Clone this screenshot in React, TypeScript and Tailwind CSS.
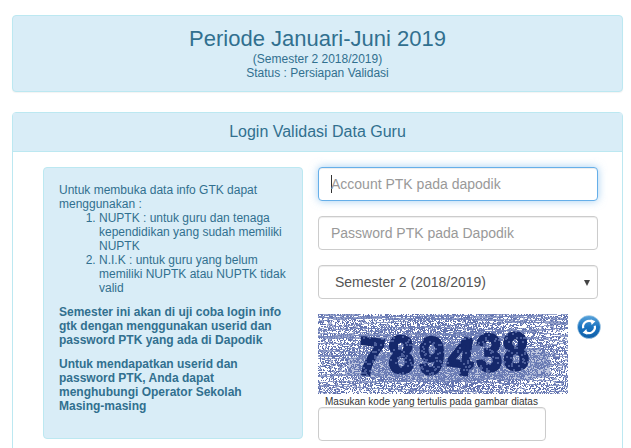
import { useMemo } from 'react';

const FONT = 'font-["Liberation_Sans",Arial,sans-serif]';

// small seeded generator so the captcha noise is the same on every load
function makeRandom(seed: number) {
  let s = seed;
  return () => {
    s = (s * 1664525 + 1013904223) % 4294967296;
    return s / 4294967296;
  };
}

function CaptchaImage() {
  const { noise, specks, lines } = useMemo(() => {
    const rand = makeRandom(7);
    let d = '';
    let sp = '';
    for (let y = 0; y < 80; y++) {
      for (let x = 0; x < 250; x++) {
        const dx = (x - 125) / 125;
        const dy = (y - 42) / 40;
        const density = 0.38 + 0.36 * Math.max(0, 1 - (dx * dx * 1.1 + dy * dy * 0.8));
        if (rand() < density) d += `M${x} ${y}h1v1h-1z`;
        if (rand() < 0.05) sp += `M${x} ${y}h2v2h-2z`;
      }
    }
    const ls: string[] = [];
    for (let i = 0; i < 26; i++) {
      const y1 = rand() * 90 - 5;
      const y2 = y1 + (rand() - 0.5) * 34;
      const cy = (y1 + y2) / 2 + (rand() - 0.5) * 26;
      ls.push(`M-5 ${y1.toFixed(1)}Q125 ${cy.toFixed(1)} 255 ${y2.toFixed(1)}`);
    }
    return { noise: d, specks: sp, lines: ls };
  }, []);

  const digits = [
    { c: '7', x: 38, y: 59, r: 7 },
    { c: '8', x: 71, y: 59, r: -2 },
    { c: '9', x: 100, y: 59, r: 3 },
    { c: '4', x: 128, y: 58, r: 8 },
    { c: '3', x: 159, y: 57, r: -2 },
    { c: '8', x: 186, y: 56, r: -3 },
  ];

  return (
    <svg width="250" height="80" viewBox="0 0 250 80" className="block shrink-0" shapeRendering="crispEdges">
      <rect width="250" height="80" fill="#ffffff" />
      <path d={noise} fill="#6172ae" />
      {lines.map((d, i) => (
        <path key={i} d={d} fill="none" stroke="#6f80b8" strokeWidth="1" opacity="0.7" />
      ))}
      <path d="M30 44L150 26L232 38L232 64L120 68L30 62Z" fill="#6f80b8" opacity="0.45" />
      {digits.map((g, i) => (
        <text
          key={i}
          transform={`translate(${g.x} ${g.y}) rotate(${g.r}) scale(0.88 1)`}
          fontFamily="'Liberation Sans', Arial, sans-serif"
          fontWeight="700"
          fontSize="52"
          fill="#15286b"
          stroke="#15286b"
          strokeWidth="3"
        >
          {g.c}
        </text>
      ))}
      <path d={specks} fill="#6f80b8" opacity="0.6" />
    </svg>
  );
}

function RefreshIcon() {
  return (
    <svg width="24" height="24" viewBox="0 0 24 24" className="block">
      <defs>
        <linearGradient id="refreshBlue" x1="0" y1="0" x2="0" y2="1">
          <stop offset="0" stopColor="#5aa5dc" />
          <stop offset="0.5" stopColor="#1a73c0" />
          <stop offset="1" stopColor="#0f5fa8" />
        </linearGradient>
      </defs>
      <circle cx="12" cy="12" r="11.5" fill="url(#refreshBlue)" stroke="#bcd6ea" strokeWidth="0.6" />
      <path d="M6.2 13.2A6 6 0 0 1 15.5 7" fill="none" stroke="#ffffff" strokeWidth="2.2" />
      <path d="M13.6 4.2L18.4 6.2L14.6 10Z" fill="#ffffff" />
      <path d="M17.8 10.8A6 6 0 0 1 8.5 17" fill="none" stroke="#ffffff" strokeWidth="2.2" />
      <path d="M10.4 19.8L5.6 17.8L9.4 14Z" fill="#ffffff" />
    </svg>
  );
}

export default function App() {
  return (
    <div className={`h-[448px] overflow-hidden bg-white pl-3 pr-2 pt-[15px] ${FONT}`}>
      <div className="mb-5 h-[77px] rounded border border-[#bce8f1] bg-[#d9edf7] pt-[9px] text-center text-[#31708f] shadow-[0_1px_1px_rgba(0,0,0,0.05)]">
        <h3 className="text-[22px] leading-[27px]">Periode Januari-Juni 2019</h3>
        <p className="text-xs leading-[14px]">(Semester 2 2018/2019)</p>
        <p className="text-xs leading-[14px]">Status : Persiapan Validasi</p>
      </div>

      <div className="h-[400px] rounded border border-[#bce8f1] bg-white">
        <div className="flex h-[39px] items-center justify-center border-b border-[#bce8f1] bg-[#d9edf7] text-base text-[#31708f]">
          Login Validasi Data Guru
        </div>

        <div className="flex items-start pl-[30px] pt-[15px]">
          <div className="h-[272px] w-[260px] rounded border border-[#bce8f1] bg-[#d9edf7] px-[15px] pt-[15px] text-xs leading-[14px] text-[#31708f]">
            <p>Untuk membuka data info GTK dapat menggunakan :</p>
            <ol className="mb-2.5 list-decimal pl-10">
              <li>NUPTK : untuk guru dan tenaga kependidikan yang sudah memiliki NUPTK</li>
              <li>N.I.K : untuk guru yang belum memiliki NUPTK atau NUPTK tidak valid</li>
            </ol>
            <p className="mb-2.5 font-bold">
              Semester ini akan di uji coba login info gtk dengan menggunakan userid dan password PTK yang ada di Dapodik
            </p>
            <p className="font-bold">
              Untuk mendapatkan userid dan password PTK, Anda dapat menghubungi Operator Sekolah Masing-masing
            </p>
          </div>

          <div className="ml-[15px] w-[280px]">
            <div className="flex h-[34px] items-center rounded border border-[#66afe9] bg-white px-3 text-sm text-[#999999] shadow-[inset_0_1px_1px_rgba(0,0,0,0.075),0_0_8px_rgba(102,175,233,0.6)]">
              <span className="h-[18px] w-px bg-[#333333]" />
              <span className="-ml-px">Account PTK pada dapodik</span>
            </div>
            <div className="mt-[15px] flex h-[34px] items-center rounded border border-[#cccccc] bg-white px-3 text-sm text-[#999999] shadow-[inset_0_1px_1px_rgba(0,0,0,0.075)]">
              Password PTK pada Dapodik
            </div>
            <div className="relative mt-[15px] flex h-[34px] items-center rounded border border-[#cccccc] bg-white pl-4 text-sm text-[#555555] shadow-[inset_0_1px_1px_rgba(0,0,0,0.075)]">
              Semester 2 (2018/2019)
              <span className="absolute right-[7px] top-[14px] h-0 w-0 border-x-[3.5px] border-t-[6px] border-x-transparent border-t-[#444444]" />
            </div>

            <div className="mt-[15px] flex items-start">
              <CaptchaImage />
              <div className="ml-[9px] mt-px shrink-0">
                <RefreshIcon />
              </div>
            </div>
            <div className="pl-[7px] pt-0.5 text-[10px] leading-[11px] text-[#333333]">
              Masukan kode yang tertulis pada gambar diatas
            </div>
            <div className="h-[34px] w-[228px] rounded border border-[#cccccc] bg-white shadow-[inset_0_1px_1px_rgba(0,0,0,0.075)]" />
          </div>
        </div>
      </div>
    </div>
  );
}
